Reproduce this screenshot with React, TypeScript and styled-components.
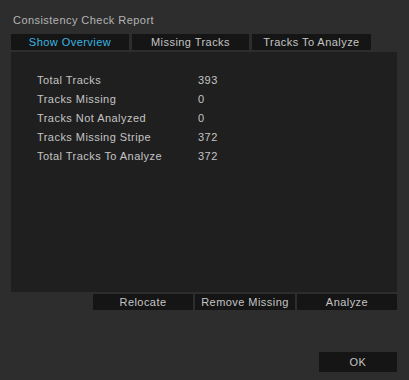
import React from 'react'
import styled, { createGlobalStyle } from 'styled-components'

const GlobalStyle = createGlobalStyle`
  html, body {
    margin: 0;
    padding: 0;
    background: #2d2d2d;
  }
  body {
    font-family: 'Liberation Sans', Arial, sans-serif;
    font-size: 11px;
    letter-spacing: 0.45px;
    color: #c4c4c4;
  }
`

const stats = [
  { label: 'Total Tracks', value: '393' },
  { label: 'Tracks Missing', value: '0' },
  { label: 'Tracks Not Analyzed', value: '0' },
  { label: 'Tracks Missing Stripe', value: '372' },
  { label: 'Total Tracks To Analyze', value: '372' }
]

const tabs = ['Show Overview', 'Missing Tracks', 'Tracks To Analyze']

const App: React.FC = () => {
  const active = 0

  return (
    <Dialog>
      <GlobalStyle />
      <Title>Consistency Check Report</Title>
      <TabBar>
        {tabs.map((tab, index) => (
          <Tab key={tab} $active={index === active}>
            {tab}
          </Tab>
        ))}
      </TabBar>
      <Panel>
        <StatsGrid>
          {stats.map((s) => (
            <React.Fragment key={s.label}>
              <StatLabel>{s.label}</StatLabel>
              <StatValue>{s.value}</StatValue>
            </React.Fragment>
          ))}
        </StatsGrid>
      </Panel>
      <ActionRow>
        <ActionButton>Relocate</ActionButton>
        <ActionButton>Remove Missing</ActionButton>
        <ActionButton>Analyze</ActionButton>
      </ActionRow>
      <Footer>
        <OkButton>OK</OkButton>
      </Footer>
    </Dialog>
  )
}

const Dialog = styled.div`
  width: 409px;
  height: 380px;
  box-sizing: border-box;
  padding: 13px 12px 0 11px;
  display: flex;
  flex-direction: column;
  background: #2d2d2d;
`

const Title = styled.div`
  height: 21px;
  padding-left: 2px;
  line-height: 15px;
  color: #b4b4b4;
`

const TabBar = styled.div`
  display: flex;
  gap: 3px;
  height: 16px;
`

const Tab = styled.div<{ $active?: boolean }>`
  width: 118px;
  line-height: 16px;
  text-align: center;
  background: #151515;
  color: ${(p) => (p.$active ? '#3ab6e2' : '#c4c4c4')};
  &:nth-child(2) {
    width: 117px;
  }
  &:nth-child(3) {
    width: 119px;
  }
`

const Panel = styled.div`
  margin-top: 2px;
  height: 240px;
  background: #1f1f1f;
  padding: 18px 0 0 26px;
  box-sizing: border-box;
`

const StatsGrid = styled.div`
  display: grid;
  grid-template-columns: 161px auto;
  grid-auto-rows: 19px;
  align-items: center;
`

const StatLabel = styled.div`
  color: #c4c4c4;
`

const StatValue = styled.div`
  color: #c4c4c4;
`

const ActionRow = styled.div`
  margin-top: 2px;
  display: flex;
  justify-content: flex-end;
  gap: 2px;
`

const ActionButton = styled.div`
  width: 100px;
  height: 16px;
  line-height: 16px;
  text-align: center;
  background: #151515;
  color: #c4c4c4;
`

const Footer = styled.div`
  margin-top: 42px;
  display: flex;
  justify-content: flex-end;
`

const OkButton = styled.div`
  width: 78px;
  height: 20px;
  line-height: 20px;
  text-align: center;
  background: #151515;
  color: #c4c4c4;
`

export default App
